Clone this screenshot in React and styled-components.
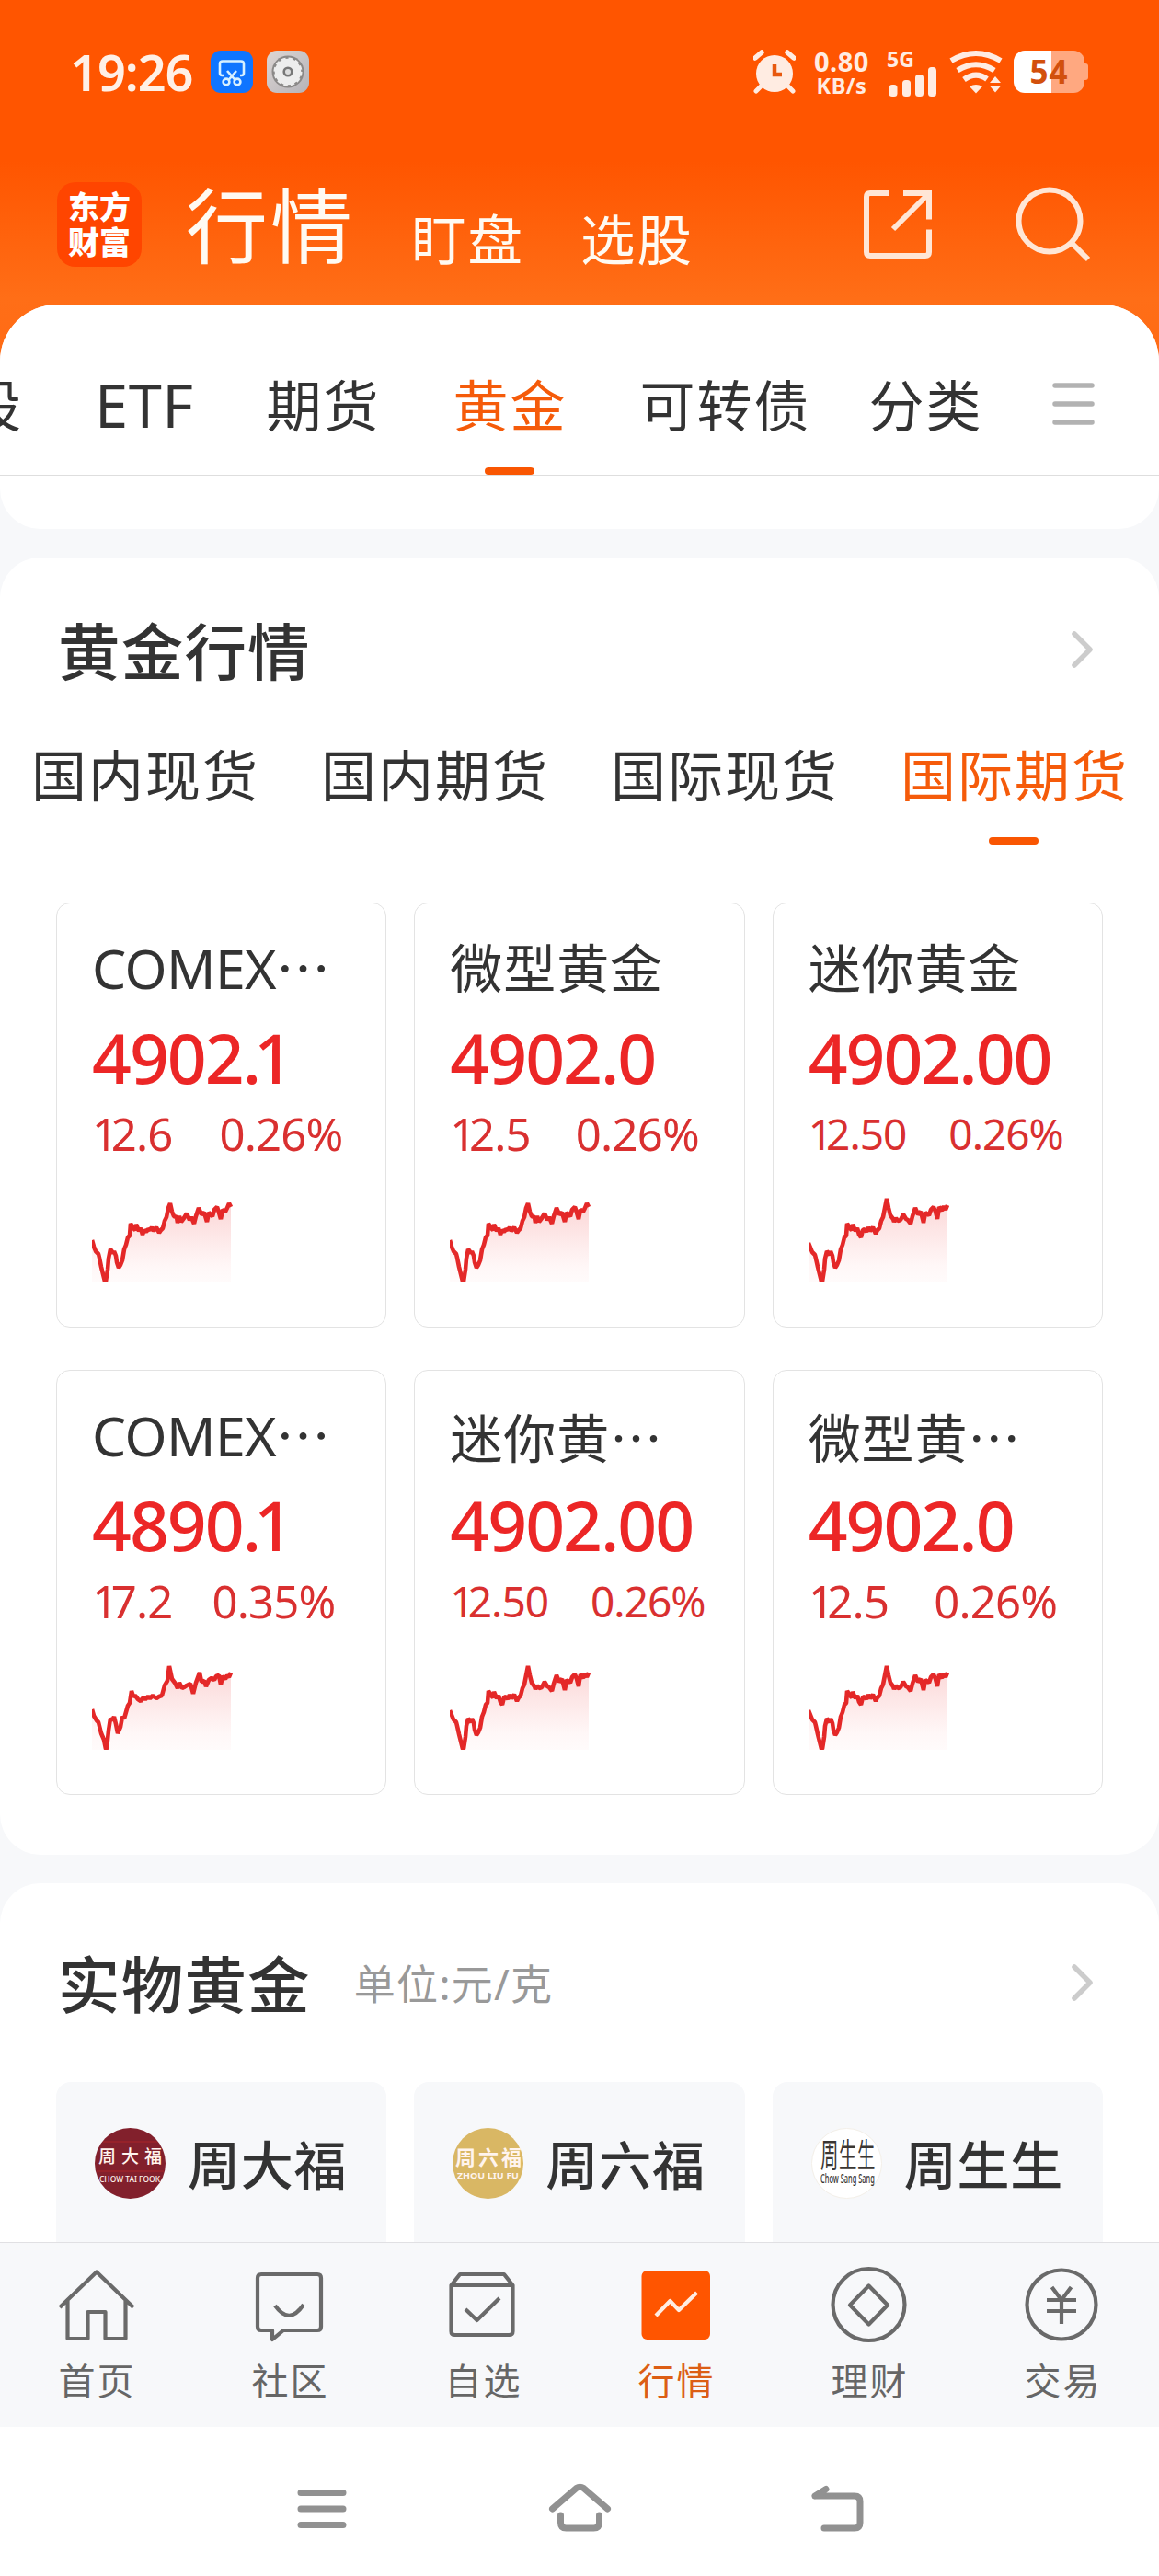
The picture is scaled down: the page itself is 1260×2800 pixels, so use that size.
import React from "react";
import styled, { createGlobalStyle } from "styled-components";

const TREND_A =
  "0,48 2,55 4,60 7,63 8,67 10,77 12,85 14,93 15,93 17,80 18,68 20,58 23,62 24,60 26,65 27,72 29,78 31,75 33,70 35,58 37,53 39,45 41,43 42,30 45,35 47,37 48,31 51,38 53,35 55,42 57,37 59,39 61,36 63,37 65,34 67,38 70,34 73,40 75,37 77,35 79,27 81,23 83,13 85,8 87,17 89,22 92,23 93,29 95,22 97,28 100,24 103,19 106,26 108,23 111,30 113,22 116,13 119,20 122,18 125,28 127,18 131,22 133,15 136,12 138,18 140,25 142,15 145,17 147,13 149,8 151,12";
const TREND_B =
  "0,51 2,56 4,61 7,64 8,68 10,77 12,85 14,93 15,93 17,80 18,68 20,60 23,64 24,60 26,65 27,72 29,78 31,75 33,70 35,58 37,53 39,45 41,43 42,30 45,35 47,37 48,31 51,38 53,35 55,42 57,45 59,37 61,36 63,39 65,34 67,38 70,34 73,41 75,37 77,35 79,27 81,23 83,13 85,3 87,13 89,21 92,25 93,28 95,24 97,27 100,26 103,20 106,25 108,26 111,30 113,22 116,13 119,20 122,17 125,29 127,18 131,21 133,15 136,12 138,17 140,25 142,12 145,16 147,11 149,15 151,10";
const TREND_C =
  "0,50 2,57 5,62 7,64 10,76 13,83 15,93 16,93 18,73 20,60 22,62 24,58 26,66 28,76 31,69 33,58 35,60 37,53 39,46 41,43 43,30 45,36 47,35 50,39 53,41 56,37 58,39 61,36 63,38 66,35 70,38 73,36 76,35 79,24 82,19 84,3 87,17 90,21 93,27 95,21 98,27 100,26 103,24 107,22 110,33 113,21 117,10 119,20 122,19 124,25 127,18 130,16 133,18 135,14 138,13 140,23 142,14 145,17 147,13 149,15 151,10";

const quotes = [
  { name: "COMEX", cut: true, price: "4902.1", diff: "12.6", rate: "0.26%", gap: 51, trend: TREND_A },
  { name: "微型黄金", price: "4902.0", diff: "12.5", rate: "0.26%", gap: 49, trend: TREND_A },
  { name: "迷你黄金", price: "4902.00", diff: "12.50", rate: "0.26%", gap: 46, small: true, trend: TREND_B },
  { name: "COMEX", cut: true, price: "4890.1", diff: "17.2", rate: "0.35%", gap: 43, trend: TREND_C },
  { name: "迷你黄", cut: true, price: "4902.00", diff: "12.50", rate: "0.26%", gap: 46, small: true, trend: TREND_B },
  { name: "微型黄", cut: true, price: "4902.0", diff: "12.5", rate: "0.26%", gap: 49, trend: TREND_B },
];

const goldTabs = ["国内现货", "国内期货", "国际现货", "国际期货"];

// the figure 1 is set narrower than the other digits
function Digits({ value }) {
  return (
    <span>
      {value.split("").map((char, index) =>
        char === "1" ? <One key={index} $first={index === 0}>1</One> : char
      )}
    </span>
  );
}

function Trend({ points, id }) {
  return (
    <TrendSvg width="153" height="94" viewBox="0 0 153 94">
      <defs>
        <linearGradient id={id} x1="0" y1="0" x2="0" y2="1">
          <stop offset="0" stopColor="#fbd6d6" />
          <stop offset="0.8" stopColor="#fff7f7" />
          <stop offset="1" stopColor="#fffbfb" />
        </linearGradient>
      </defs>
      <polygon points={`0,94 ${points} 151,94`} fill={`url(#${id})`} />
      <polyline points={points} fill="none" stroke="#e42828" strokeWidth="4.600" strokeLinejoin="bevel" />
    </TrendSvg>
  );
}

function Chevron() {
  return (
    <svg width="26" height="42" viewBox="0 0 26 42" fill="none" stroke="#ccc" strokeWidth="5.500" strokeLinecap="round" strokeLinejoin="round">
      <path d="M4 4 L21 21 L4 38" />
    </svg>
  );
}

function AlarmIcon() {
  return (
    <svg width="46" height="50" viewBox="818 53 46 50" fill="#ffece2">
      <circle cx="841" cy="80" r="20" />
      <path d="M826 94 l-5 5 M856 94 l5 5" stroke="#ffece2" strokeWidth="5" strokeLinecap="round" />
      <path d="M820 63 l7 -6 M862 63 l-7 -6" stroke="#ffece2" strokeWidth="5.500" strokeLinecap="round" />
      <path d="M841 70 V81 H849" stroke="#e8590f" strokeWidth="4.500" fill="none" />
    </svg>
  );
}

function SignalBars() {
  return (
    <svg width="52" height="32" viewBox="966 70 52 32" fill="#ffece2">
      <rect x="966.500" y="89" width="9" height="13" rx="3.500" />
      <rect x="981" y="84" width="9" height="18" rx="3.500" />
      <rect x="995" y="78" width="9" height="24" rx="3.500" />
      <rect x="1009" y="70" width="9" height="32" rx="3.500" />
    </svg>
  );
}

function WifiIcon() {
  return (
    <svg width="58" height="50" viewBox="1032 54 58 50" fill="none" stroke="#ffece2" strokeWidth="6">
      <path d="M1034 67 Q1061 51 1088 67" />
      <path d="M1041 77.500 Q1061 65 1081 77.500" />
      <path d="M1048 87.500 Q1061 78 1073 87" />
      <path d="M1054 95 Q1061 91 1068 95 L1061 102.500 Z" fill="#ffece2" stroke="none" />
      <path d="M1076 91 L1082 84 L1088 91 Z M1076 94.500 L1082 101.500 L1088 94.500 Z" fill="#ffece2" stroke="none" />
    </svg>
  );
}

function ScissorsIcon() {
  return (
    <svg width="46" height="46" viewBox="0 0 46 46" fill="none" stroke="#d8f1ff" strokeWidth="2.600">
      <rect width="46" height="46" rx="11" fill="#0f75ff" stroke="none" />
      <path d="M14 27 h-1.500 q-2.500 0 -2.500 -2.500 V14.500 q0 -3 3 -3 H33 q3 0 3 3 V24.500 q0 2.500 -2.500 2.500 H32" />
      <path d="M18 22 L27 32.500 M28 22 L19 32.500" />
      <circle cx="17" cy="34" r="3.400" />
      <circle cx="29" cy="34" r="3.400" />
    </svg>
  );
}

function GearIcon() {
  return (
    <svg width="46" height="46" viewBox="0 0 46 46">
      <defs>
        <linearGradient id="gear" x1="0" y1="0" x2="1" y2="1">
          <stop offset="0" stopColor="#ddd6d4" />
          <stop offset="1" stopColor="#b5b3b8" />
        </linearGradient>
      </defs>
      <rect width="46" height="46" rx="11" fill="url(#gear)" />
      <circle cx="23" cy="23" r="17.500" fill="#8b8988" />
      <circle cx="23" cy="23" r="14.300" fill="#ededed" stroke="#ededed" strokeWidth="2.500" strokeDasharray="4.500 3" />
      <circle cx="23" cy="23" r="4.300" fill="#ddd" stroke="#777" strokeWidth="2.600" />
    </svg>
  );
}

function BrandLogo({ brand }) {
  if (brand === "ctf") {
    return (
      <svg width="77" height="77" viewBox="0 0 77 77">
        <circle cx="38.500" cy="38.500" r="38.500" fill="#82202c" />
        <path d="M9 15 H68 M2 47 H75" stroke="#96222a" strokeWidth="2" />
        <LogoText x="4" y="38" fontSize="19" textLength="69">周大福</LogoText>
        <LogoText x="5" y="58.500" fontSize="8" textLength="66" lengthAdjust="spacingAndGlyphs">CHOW TAI FOOK</LogoText>
      </svg>
    );
  }
  if (brand === "zlf") {
    return (
      <svg width="77" height="77" viewBox="0 0 77 77">
        <circle cx="38.500" cy="38.500" r="38.500" fill="#d9b764" />
        <LogoText x="3" y="40" fontSize="22" textLength="72" $weight={700}>周六福</LogoText>
        <LogoText x="5" y="55" fontSize="9" textLength="67" lengthAdjust="spacingAndGlyphs" $weight={700}>ZHOU LIU FU</LogoText>
      </svg>
    );
  }
  return (
    <svg width="77" height="77" viewBox="0 0 77 77">
      <circle cx="38.500" cy="38.500" r="38" fill="#fff" stroke="#f3efe8" />
      <g transform="translate(10 0) scale(0.54 1)">
        <LogoText x="0" y="43" fontSize="36" textLength="110" $dark $weight={400}>周生生</LogoText>
        <LogoText x="0" y="60" fontSize="14" textLength="109" lengthAdjust="spacingAndGlyphs" $dark>Chow Sang Sang</LogoText>
      </g>
    </svg>
  );
}

const navItems = [
  {
    label: "首页",
    icon: <path d="M65 2508 L105 2469.500 L145 2508 M73.500 2501 V2542 H95.500 V2513 H114.500 V2542 H136.500 V2501" />,
  },
  {
    label: "社区",
    icon: (
      <>
        <path d="M284 2472 h61 q4 0 4 4 v53 q0 4 -4 4 h-37 l-12 10 v-10 h-12 q-4 0 -4 -4 v-53 q0 -4 4 -4 z" />
        <path d="M299 2506 Q314.500 2528 330 2505" />
      </>
    ),
  },
  {
    label: "自选",
    icon: (
      <>
        <path d="M490.500 2484 L500 2472 H548 L557.500 2484 V2534 q0 4 -4 4 H494.500 q-4 0 -4 -4 Z M490.500 2484 H557.500" />
        <path d="M506 2510 L518.500 2522 L543 2498" />
      </>
    ),
  },
  {
    label: "行情",
    active: true,
    icon: (
      <>
        <rect x="697.500" y="2468" width="74.500" height="75" rx="6" fill="#ff5500" stroke="none" />
        <path d="M713 2517 L728.500 2501 L738 2511 L757.500 2492" stroke="#ffece2" />
      </>
    ),
  },
  {
    label: "理财",
    icon: (
      <>
        <circle cx="944.500" cy="2505" r="39" />
        <path d="M944.500 2484.500 L965 2505.500 L944.500 2526.500 L924 2505.500 Z" />
      </>
    ),
  },
  {
    label: "交易",
    icon: (
      <>
        <circle cx="1154" cy="2505" r="37.500" />
        <path d="M1143.500 2486 L1154 2500 L1164.500 2486 M1138 2500 H1170 M1138 2512 H1170 M1154 2500 V2526" />
      </>
    ),
  },
];

export default function App() {
  return (
    <Screen>
      <GlobalStyle />
      <Header>
        <StatusBar>
          <Clock>19:26</Clock>
          <ScissorsIcon />
          <GearIcon />
          <StatusRight>
            <AlarmIcon />
            <NetSpeed>
              <span>0.80</span>
              <small>KB/s</small>
            </NetSpeed>
            <Signal>
              <SignalLabel>5G</SignalLabel>
              <SignalBars />
            </Signal>
            <WifiIcon />
            <Battery>54</Battery>
          </StatusRight>
        </StatusBar>
        <TitleBar>
          <Logo>
            <span>东方</span>
            <span>财富</span>
          </Logo>
          <PageTitle>行情</PageTitle>
          <PageLink>盯盘</PageLink>
          <PageLink>选股</PageLink>
          <HeaderActions>
            <svg width="75" height="82" viewBox="938 203 75 82" fill="none" stroke="#ffe6d6" strokeWidth="6">
              <path d="M967 210 H946 q-4 0 -4 4 V274 q0 4 4 4 H1006 q4 0 4 -4 V249.500" />
              <path d="M982 210 H1010 V238.500 M1008 212 L971 249" />
            </svg>
            <svg width="82" height="82" viewBox="1103 203 82 82" fill="none" stroke="#ffe6d6" strokeWidth="6">
              <circle cx="1141" cy="240" r="33.500" />
              <path d="M1165 264 L1183 282" />
            </svg>
          </HeaderActions>
        </TitleBar>
      </Header>

      <Sheet>
        <MarketTabs>
          <MarketTab>股</MarketTab>
          <MarketTab $latin>ETF</MarketTab>
          <MarketTab>期货</MarketTab>
          <MarketTab $active>黄金</MarketTab>
          <MarketTab>可转债</MarketTab>
          <MarketTab $last>分类</MarketTab>
          <MenuButton>
            <svg width="46" height="48" viewBox="0 0 46 48" stroke="#b2b2b2" strokeWidth="5.500" strokeLinecap="round">
              <path d="M3 4 H43 M3 24 H43 M3 44 H43" />
            </svg>
          </MenuButton>
        </MarketTabs>
      </Sheet>

      <Section>
        <SectionHead $height={200}>
          <SectionTitle>黄金行情</SectionTitle>
          <Chevron />
        </SectionHead>
        <GoldTabs>
          {goldTabs.map((tab, index) => (
            <GoldTab key={tab} $active={index === 3}>{tab}</GoldTab>
          ))}
        </GoldTabs>
        <QuoteGrid>
          {quotes.map((quote, index) => (
            <QuoteCard key={index}>
              <QuoteName $latin={quote.name === "COMEX"}>
                {quote.name}
                {quote.cut && <Dots lang="zh-CN">⋯</Dots>}
              </QuoteName>
              <Price><Digits value={quote.price} /></Price>
              <Change $small={quote.small} $gap={quote.gap}>
                <Digits value={quote.diff} />
                <Digits value={quote.rate} />
              </Change>
              <Trend points={quote.trend} id={`trend-${index}`} />
            </QuoteCard>
          ))}
        </QuoteGrid>
      </Section>

      <ShopSection>
        <SectionHead $height={216}>
          <SectionTitle>实物黄金</SectionTitle>
          <Unit>单位:元/克</Unit>
          <Chevron />
        </SectionHead>
        <ShopGrid>
          <ShopCard><BrandLogo brand="ctf" />周大福</ShopCard>
          <ShopCard><BrandLogo brand="zlf" />周六福</ShopCard>
          <ShopCard><BrandLogo brand="css" />周生生</ShopCard>
        </ShopGrid>
      </ShopSection>

      <BottomNav>
        {navItems.map((item, index) => (
          <NavItem key={item.label} $active={item.active}>
            <svg width="90" height="90" viewBox={`${60 + index * 210} 2460 90 90`} fill="none" stroke="#6a6a6a" strokeWidth="4.200" strokeLinejoin="round">
              {item.icon}
            </svg>
            {item.label}
          </NavItem>
        ))}
      </BottomNav>

      <SystemNav>
        <svg width="66" height="60" viewBox="317 2697 66 60">
          <path d="M327 2709.500 H373 M327 2727 H373 M327 2744.500 H373" />
        </svg>
        <svg width="70" height="60" viewBox="595.500 2697 70 60">
          <path d="M600 2727 L626 2704.500 Q630 2702 634 2704.500 L660 2727 M609 2734 V2742 Q609 2748 615 2748 H645 Q651 2748 651 2742 V2734" />
        </svg>
        <svg width="66" height="60" viewBox="878 2697 66 60">
          <path d="M886 2713 H929 Q935 2713 935 2719 V2742 Q935 2748 929 2748 H896 M886 2713 L898 2705.500" />
        </svg>
      </SystemNav>
    </Screen>
  );
}

const GlobalStyle = createGlobalStyle`
  * {
    box-sizing: border-box;
  }
  body {
    margin: 0;
    background: #fff;
    font-family: "Noto Sans", "Noto Sans CJK SC", sans-serif;
    color: #333;
  }
  svg {
    display: block;
    flex-shrink: 0;
  }
`;

const Screen = styled.div`
  width: 1260px;
  height: 2800px;
  display: flex;
  flex-direction: column;
  overflow: hidden;
  background: #f7f8fa;
`;
const Header = styled.header`
  height: 400px;
  flex-shrink: 0;
  background: linear-gradient(#ff5500 0, #ff5500 175px, #ff6e17 325px, #ff6a14 400px);
`;
const StatusBar = styled.div`
  height: 156px;
  padding: 0 77px 0 76px;
  display: flex;
  align-items: center;
`;
const Clock = styled.div`
  width: 153px;
  font-size: 54px;
  font-weight: 600;
  line-height: 60px;
  letter-spacing: -1px;
  color: #fff0e6;
  & + svg {
    margin-right: 15px;
  }
`;
const StatusRight = styled.div`
  margin-left: auto;
  display: flex;
  align-items: center;
  color: #ffece2;
  font-weight: 700;
`;
const NetSpeed = styled.div`
  width: 66px;
  margin: 2px 0 0 17px;
  display: flex;
  flex-direction: column;
  align-items: center;
  font-size: 29px;
  line-height: 29px;
  letter-spacing: 0.5px;
  small {
    font-size: 23.5px;
    line-height: 25px;
  }
`;
const Signal = styled.div`
  height: 50px;
  width: 54px;
  margin: 0 14px 0 16px;
  display: flex;
  flex-direction: column;
  justify-content: space-between;
  align-items: flex-end;
`;
const SignalLabel = styled.div`
  height: 17px;
  align-self: flex-start;
  margin-top: 3px;
  font-size: 23px;
  line-height: 17px;
`;
const Battery = styled.div`
  position: relative;
  width: 77px;
  height: 46px;
  margin-left: 12px;
  margin-right: 4px;
  border-radius: 12px;
  background: linear-gradient(90deg, #fff 41px, #ffa880 41px);
  color: #d2500c;
  font-size: 35px;
  line-height: 45px;
  letter-spacing: 1px;
  text-align: center;
  &::after {
    content: "";
    position: absolute;
    right: -4px;
    top: 14px;
    width: 4px;
    height: 18px;
    border-radius: 0 3px 3px 0;
    background: #ffa880;
  }
`;
const TitleBar = styled.div`
  height: 176px;
  padding: 0 75px 0 62px;
  display: flex;
  align-items: center;
  color: #fffaf2;
`;
const Logo = styled.div`
  width: 92px;
  height: 92px;
  border-radius: 20px;
  background: #ff4500;
  display: flex;
  flex-direction: column;
  align-items: center;
  justify-content: center;
  color: #fff;
  font-size: 34px;
  font-weight: 900;
  line-height: 38px;
`;
const PageTitle = styled.h1`
  margin: 2px 0 0 48px;
  width: 245px;
  font-size: 89px;
  font-weight: 400;
  line-height: 100px;
  letter-spacing: 3px;
`;
const PageLink = styled.div`
  margin-top: 31px;
  width: 184px;
  font-size: 59.5px;
  line-height: 70px;
  letter-spacing: 2px;
`;
const HeaderActions = styled.div`
  margin-left: auto;
  display: flex;
  justify-content: space-between;
  width: 247px;
`;
const Sheet = styled.div`
  height: 244px;
  margin-top: -69px;
  flex-shrink: 0;
  border-radius: 62px 62px 0 0;
  background: #f7f8fa;
  &::after {
    content: "";
    display: block;
    height: 58px;
    background: #fff;
    border-radius: 0 0 44px 44px;
  }
`;
const MarketTabs = styled.nav`
  height: 186px;
  border-bottom: 1px solid #dedede;
  border-radius: 62px 62px 0 0;
  background: #fff;
  display: flex;
  overflow: hidden;
  padding-left: 1px;
  /* the row is scrolled, its first tab is cut by the edge */
  & > :first-child {
    margin-left: -38px;
  }
`;
const MarketTab = styled.div`
  position: relative;
  flex-shrink: 0;
  margin-right: ${props => (props.$last ? "0" : "79px")};
  margin-left: ${props => (props.$last ? "-16px" : props.$latin ? "-1px" : "0")};
  padding-top: 65px;
  font-size: ${props => (props.$latin ? "65px" : "60px")};
  line-height: ${props => (props.$latin ? "89px" : "90px")};
  letter-spacing: ${props => (props.$latin ? "0.5px" : "2px")};
  color: ${props => (props.$active ? "#f55b0a" : "#333")};
  &::after {
    content: "";
    display: ${props => (props.$active ? "block" : "none")};
    position: absolute;
    left: 50%;
    bottom: 0;
    width: 54px;
    height: 8px;
    margin-left: -28px;
    border-radius: 4px;
    background: #f95602;
  }
`;
const MenuButton = styled.div`
  margin: 84px 70px 0 auto;
`;
const Section = styled.section`
  height: 1410px;
  margin-top: 31px;
  flex-shrink: 0;
  border-radius: 44px;
  background: #fff;
`;
const ShopSection = styled(Section)`
  height: 390px;
  border-radius: 44px 44px 0 0;
`;
const SectionHead = styled.div`
  height: ${props => props.$height}px;
  padding: 0 70px 0 63px;
  display: flex;
  align-items: center;
  svg {
    margin-left: auto;
  }
`;
const SectionTitle = styled.h2`
  margin: 4px 0 0;
  font-size: 67.5px;
  font-weight: 500;
  line-height: 80px;
  letter-spacing: 1.2px;
`;
const Unit = styled.div`
  margin: 4px 0 0 47px;
  font-size: 45px;
  line-height: 60px;
  letter-spacing: 1.3px;
  color: #999;
`;
const GoldTabs = styled.nav`
  height: 113px;
  border-bottom: 1px solid #e4e4e4;
  display: grid;
  grid-template-columns: repeat(4, 1fr);
`;
const GoldTab = styled.div`
  position: relative;
  padding-left: 1px;
  text-align: center;
  font-size: 60px;
  line-height: 75px;
  letter-spacing: 2px;
  color: ${props => (props.$active ? "#f55b0a" : "#333")};
  &::after {
    content: "";
    display: ${props => (props.$active ? "block" : "none")};
    position: absolute;
    left: 50%;
    bottom: 0;
    width: 54px;
    height: 8px;
    margin-left: -28px;
    border-radius: 4px;
    background: #f95602;
  }
`;
const QuoteGrid = styled.div`
  padding: 62px 61px 0;
  display: grid;
  grid-template-columns: repeat(3, 1fr);
  gap: 46px 30px;
`;
const QuoteCard = styled.div`
  height: 462px;
  padding: 31px 0 0 38px;
  border: 1px solid #e3e3e3;
  border-radius: 15px;
  white-space: nowrap;
`;
const QuoteName = styled.div`
  height: 80px;
  font-size: ${props => (props.$latin ? "59px" : "57px")};
  line-height: ${props => (props.$latin ? "73px" : "78px")};
  letter-spacing: ${props => (props.$latin ? "-0.6px" : "0.9px")};
`;
const Dots = styled.span`
  font-family: "Noto Sans CJK SC", sans-serif;
`;
const One = styled.span`
  margin-left: ${props => (props.$first ? "0" : "-0.08em")};
  letter-spacing: -0.15em;
`;
const Price = styled.div`
  font-size: 75px;
  font-weight: 500;
  line-height: 112px;
  letter-spacing: -2px;
  color: #ec2626;
`;
const Change = styled.div`
  display: flex;
  gap: ${props => props.$gap}px;
  font-size: ${props => (props.$small ? "46px" : "49px")};
  line-height: 54px;
  letter-spacing: ${props => (props.$small ? "-1px" : "-0.8px")};
  color: #d93030;
`;
const TrendSvg = styled.svg`
  margin-top: 41px;
`;
const ShopGrid = styled.div`
  padding: 0 61px;
  display: grid;
  grid-template-columns: repeat(3, 1fr);
  gap: 30px;
`;
const ShopCard = styled.div`
  height: 174px;
  padding: 50px 0 0 42px;
  display: flex;
  align-items: flex-start;
  gap: 24px;
  border-radius: 16px 16px 0 0;
  background: #f7f8fa;
  font-size: 57px;
  font-weight: 500;
  line-height: 81px;
  letter-spacing: 0.8px;
`;
const LogoText = styled.text`
  font-weight: ${props => props.$weight || 500};
  letter-spacing: 0;
  fill: ${props => (props.$dark ? "#3a3632" : "#fff4ee")};
`;
const BottomNav = styled.nav`
  height: 201px;
  flex-shrink: 0;
  border-top: 1px solid #e0e0e3;
  background: #f7f8fa;
  display: grid;
  grid-template-columns: repeat(6, 1fr);
`;
const NavItem = styled.div`
  padding-top: 22px;
  display: flex;
  flex-direction: column;
  align-items: center;
  font-size: 40px;
  line-height: 76px;
  letter-spacing: 2px;
  text-indent: 1px;
  color: ${props => (props.$active ? "#dc5e14" : "#666")};
`;
const SystemNav = styled.div`
  height: 162px;
  flex-shrink: 0;
  padding: 0 316px 35px 317px;
  display: flex;
  align-items: flex-end;
  justify-content: space-between;
  background: #fff;
  svg {
    margin-bottom: 8px;
    fill: none;
    stroke: #919191;
    stroke-width: 7;
    stroke-linecap: round;
  }
`;
